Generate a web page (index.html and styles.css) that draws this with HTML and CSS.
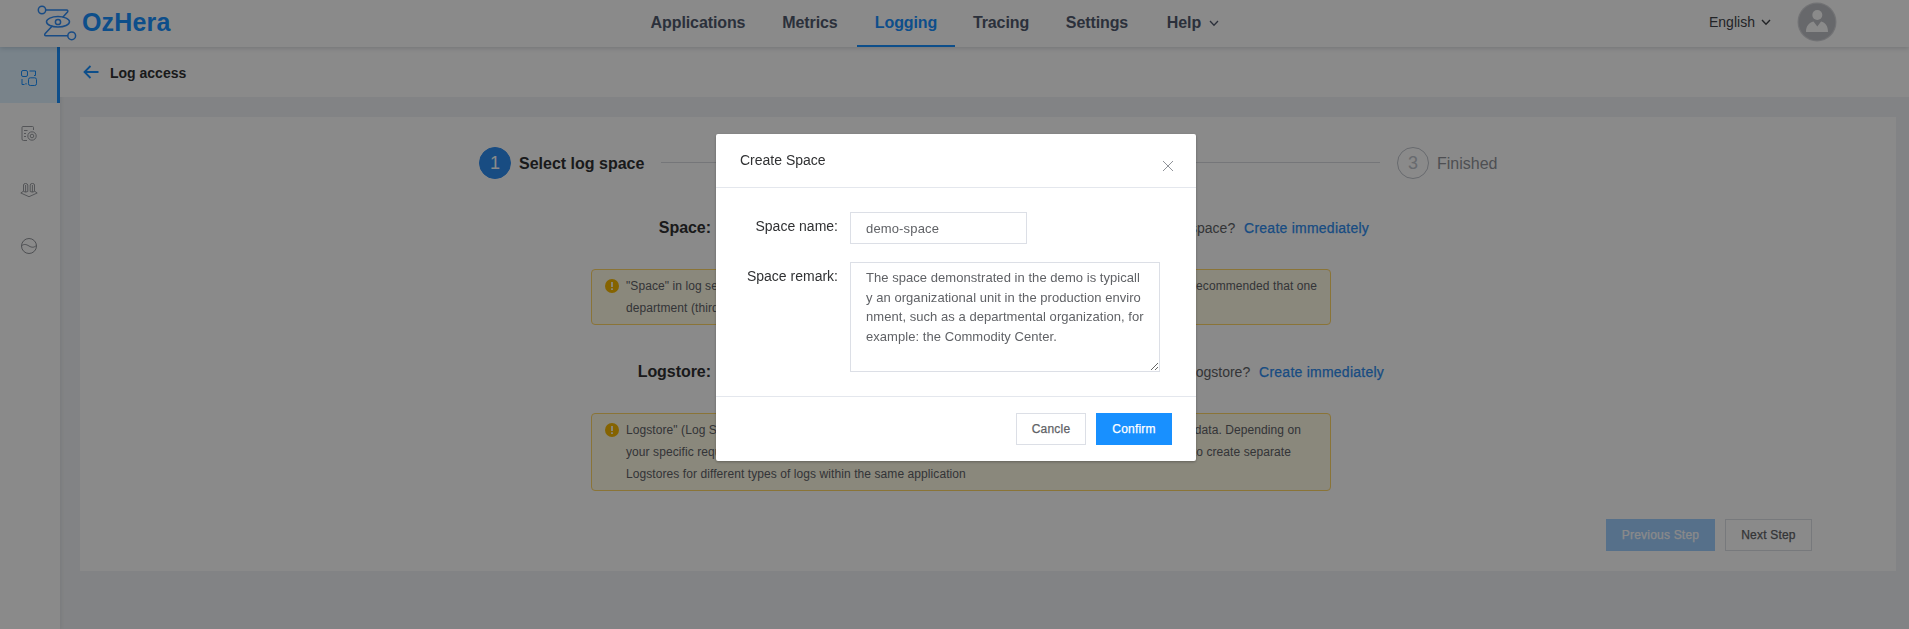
FILE: index.html
```html
<!DOCTYPE html>
<html lang="en">
<head>
<meta charset="utf-8">
<title>OzHera - Log access</title>
<link rel="stylesheet" href="styles.css">
</head>
<body>
<div class="app">
  <header class="header">
    <div class="brand">
      <svg class="brand-mark" width="40" height="38" viewBox="0 0 40 38" fill="none" stroke="#2f8cf5" stroke-width="1.500">
        <circle cx="5" cy="6" r="3.700"/><circle cx="34.700" cy="31.800" r="3.900"/>
        <path d="M9 6h20.500q2 .3 1 2l-4.500 5M30.500 31.800H9q-2-.3-1-2l7-7.500" stroke-linecap="round"/>
        <ellipse cx="21" cy="17.800" rx="11.500" ry="5.200"/><circle cx="21" cy="18" r="2.600"/>
      </svg>
      <span class="brand-name">OzHera</span>
    </div>
    <nav class="nav">
      <a class="tab tab-applications">Applications</a>
      <a class="tab tab-metrics">Metrics</a>
      <a class="tab tab-logging active">Logging</a>
      <a class="tab tab-tracing">Tracing</a>
      <a class="tab tab-settings">Settings</a>
      <a class="tab tab-help">Help<svg width="10" height="7" viewBox="0 0 10 7" fill="none" stroke="currentColor" stroke-width="1.300"><path d="M1 1l4 4.300L9 1"/></svg></a>
    </nav>
    <div class="account">
      <span class="language">English<svg width="10" height="7" viewBox="0 0 10 7" fill="none" stroke="currentColor" stroke-width="1.400"><path d="M1 1l4 4.300L9 1"/></svg></span>
      <svg class="avatar" width="40" height="40" viewBox="0 0 40 40">
        <circle cx="20" cy="20" r="19.500" fill="#d3d4d8"/><circle cx="20" cy="20" r="18.300" fill="#bfc0c6"/>
        <circle cx="20.300" cy="13" r="5" fill="#fff"/><path d="M9 30c0-6 3-9.500 7.500-10.500l3.800 5 3.800-5C28.500 20.500 31 24 31 30z" fill="#fff"/>
      </svg>
    </div>
  </header>
  <div class="body">
    <aside class="sidebar">
      <a class="side-item active"><svg width="18" height="18" viewBox="0 0 18 18" fill="none" stroke="currentColor" stroke-width="1"><rect x="1.500" y="1.500" width="6" height="6" rx="1.500"/><path d="M9.500 2h6v4.500h-1.500M2 10v5.500h2.500M6 14v1.500"/><rect x="8.500" y="8.800" width="8" height="7.700" rx="1.800"/></svg></a>
      <a class="side-item"><svg width="18" height="18" viewBox="0 0 18 18" fill="none" stroke="currentColor" stroke-width=".9"><path d="M7 15.500H3.500q-1.500 0-1.500-1.500V2.500q0-1 1-1h9.500q1 0 1 1V5M4 5.500h3.500M4 8.500h2M4 11.500h2"/><circle cx="12" cy="11" r="4.200"/><circle cx="12" cy="11" r="1.800"/></svg></a>
      <a class="side-item"><svg width="18" height="18" viewBox="0 0 18 18" fill="none" stroke="currentColor" stroke-width=".9"><path d="M3.500 10.500V4q0-1.500 2-1.500T7.800 4v6.500q-2.200 1.200-4.300 0zM10.200 10.500V4q0-1.500 2.200-1.500T14.500 4v6.500q-2.200 1.200-4.300 0zM5.600 4v7M12.400 4v7M3 10.500L.800 12 9 15.700 17.200 12 15 10.500"/></svg></a>
      <a class="side-item"><svg width="18" height="18" viewBox="0 0 18 18" fill="none" stroke="currentColor" stroke-width="1"><circle cx="9" cy="9" r="7.500"/><path d="M1.500 9C4 6.500 6.500 7.500 9 9s5 2 7.500-.8"/></svg></a>
    </aside>
    <main class="main">
      <div class="page-bar">
        <svg width="16" height="14" viewBox="0 0 16 14" fill="none" stroke="#1890ff" stroke-width="1.800"><path d="M7.500 1L1.500 7l6 6M1.500 7H15.500"/></svg>
        <h1 class="page-title">Log access</h1>
      </div>
      <section class="panel">
        <div class="steps">
          <span class="step-dot current">1</span><span class="step-label current">Select log space</span>
          <span class="step-line"></span>
          <span class="step-dot">3</span><span class="step-label">Finished</span>
        </div>
        <div class="field-row">
          <strong class="field-label">Space:</strong>
          <span class="field-tip space-tip">No space? <a class="link">Create immediately</a></span>
        </div>
        <div class="alert space-alert">
          <svg class="alert-icon" width="14" height="14" viewBox="0 0 14 14"><circle cx="7" cy="7" r="7" fill="#f5b800"/><path d="M7 3v5M7 9.300v1.700" stroke="#fff" stroke-width="1.700"/></svg>
          <div class="alert-text">
            <p class="split split-a"><span>"Space" in log service</span><span>recommended that one</span></p>
            <p>department (third-level)</p>
          </div>
        </div>
        <div class="field-row store-row">
          <strong class="field-label">Logstore:</strong>
          <span class="field-tip store-tip">No Logstore? <a class="link">Create immediately</a></span>
        </div>
        <div class="alert store-alert">
          <svg class="alert-icon" width="14" height="14" viewBox="0 0 14 14"><circle cx="7" cy="7" r="7" fill="#f5b800"/><path d="M7 3v5M7 9.300v1.700" stroke="#fff" stroke-width="1.700"/></svg>
          <div class="alert-text">
            <p class="split split-b"><span>Logstore" (Log Storage)</span><span>data. Depending on</span></p>
            <p class="split split-c"><span>your specific requirements</span><span>to create separate</span></p>
            <p>Logstores for different types of logs within the same application</p>
          </div>
        </div>
        <div class="panel-actions">
          <button class="btn btn-previous">Previous Step</button>
          <button class="btn btn-next">Next Step</button>
        </div>
      </section>
    </main>
  </div>
</div>
<div class="overlay">
  <div class="dialog">
    <div class="dialog-header">
      <span class="dialog-title">Create Space</span>
      <svg class="dialog-close" width="12" height="12" viewBox="0 0 12 12" fill="none" stroke="#909399" stroke-width="1"><path d="M1 1l10 10M11 1L1 11"/></svg>
    </div>
    <form class="dialog-body">
      <label class="form-label" for="name">Space name:</label>
      <input class="control control-name" id="name" value="demo-space">
      <label class="form-label" for="remark">Space remark:</label>
      <textarea class="control control-remark" id="remark" spellcheck="false">The space demonstrated in the demo is typicall
y an organizational unit in the production enviro
nment, such as a departmental organization, for
example: the Commodity Center.</textarea>
    </form>
    <div class="dialog-footer">
      <button class="btn btn-cancel">Cancle</button>
      <button class="btn btn-confirm">Confirm</button>
    </div>
  </div>
</div>
</body>
</html>
```
FILE: styles.css
```css
* { box-sizing: border-box; }
body { margin: 0; overflow: hidden; font-family: "Liberation Sans", Arial, sans-serif; font-size: 14px; color: #303133; }
p, h1 { margin: 0; }
svg { flex: none; }
.app { height: 629px; display: flex; flex-direction: column; background: #f0f2f5; }

.header { height: 47px; flex: none; display: flex; background: #fff; box-shadow: 0 1px 5px rgba(0, 21, 41, .18); z-index: 1; }
.brand { width: 633px; flex: none; padding: 4px 0 0 37px; display: flex; gap: 5px; }
.brand-name { font-size: 25px; line-height: 36px; font-weight: 700; color: #1890ff; letter-spacing: .15px; }
.nav { display: flex; }
.tab { height: 47px; line-height: 45px; text-align: center; font-size: 16px; font-weight: 700; color: #515a6e; letter-spacing: -.1px; white-space: nowrap; }
.tab.active { color: #1890ff; border-bottom: 2px solid #1890ff; }
.tab-applications { width: 130px; }
.tab-metrics { width: 94px; }
.tab-logging { width: 98px; }
.tab-tracing { width: 92px; }
.tab-settings { width: 100px; }
.tab-help { width: 92px; }
.tab svg { margin-left: 8px; vertical-align: 1px; }
.account { margin-left: auto; padding-right: 72px; display: flex; }
.language { font-size: 14px; line-height: 45px; width: 88px; white-space: nowrap; color: #515a6e; color: #404348; }
.language svg { margin-left: 6px; vertical-align: 1px; }
.avatar { margin-top: 2px; }

.body { flex: 1; display: flex; }
.sidebar { width: 60px; background: #fff; box-shadow: 1px 0 4px rgba(0, 21, 41, .08); }
.side-item { height: 56px; padding: 6px 0 0 20px; display: flex; align-items: center; color: #909399; }
.side-item.active { color: #1890ff; background: #dff2ff; border-right: 3px solid #1890ff; }
.main { flex: 1; }
.page-bar { height: 50px; padding: 0 0 1px 23px; display: flex; align-items: center; gap: 11px; background: #fff; }
.page-title { font-size: 14px; line-height: 20px; padding-top: 3px; }

.panel { margin: 20px 13px 0 20px; height: 454px; padding-top: 30px; background: #fff; }
.steps { height: 32px; margin-left: 399px; display: flex; align-items: center; }
.step-dot { width: 32px; height: 32px; border: 1px solid #c0c4cc; border-radius: 50%; line-height: 31px; text-align: center; font-size: 18px; color: #c0c4cc; }
.step-dot.current { background: #2d8cf0; border-color: #2d8cf0; color: #fff; }
.step-label { margin-left: 8px; padding-top: 2px; font-size: 16px; color: #909399; }
.step-label.current { width: 142px; color: #303133; font-weight: 700; }
.step-line { width: 719px; height: 1px; margin: -2px 17px 0 0; background: #d8dae0; }

.field-row { height: 20px; margin: 39px 0 0 511px; line-height: 20px; display: flex; align-items: center; }
.store-row { margin-top: 37px; }
.field-label { width: 120px; text-align: right; font-size: 16px; white-space: nowrap; letter-spacing: -.05px; }
.field-tip { text-align: right; color: #606266; }
.space-tip { width: 658px; }
.store-tip { width: 673px; }
.link { margin-left: 5px; color: #2d8cf0; letter-spacing: .24px; -webkit-text-stroke: .25px #2d8cf0; }
.alert { width: 740px; margin: 31px 0 0 511px; padding: 5px 10px 5px 13px; display: flex; gap: 7px; border: 1px solid #ffd666; border-radius: 4px; background: #fffbe6; }
.space-alert { height: 56px; }
.store-alert { height: 78px; }
.alert-icon { margin-top: 4px; }
.alert-text { font-size: 12px; line-height: 22px; color: #606266; white-space: nowrap; letter-spacing: .08px; }
.split { display: flex; justify-content: space-between; }
.split-a { width: 691px; }
.split-b { width: 675px; }
.split-c { width: 665px; }
.panel-actions { margin: 28px 84px 0 0; display: flex; justify-content: flex-end; gap: 10px; }
.btn { height: 32px; padding: 0; font: 12px "Liberation Sans", Arial, sans-serif; -webkit-text-stroke: .25px currentColor; letter-spacing: .2px; border: 1px solid #dcdfe6; background: #fff; color: #606266; }
.btn-previous { width: 109px; background: #a0cfff; border-color: #a0cfff; color: #fff; }
.btn-next { width: 87px; }

.overlay { position: fixed; inset: 0; padding: 134px 0 0 716px; background: rgba(0, 0, 0, .46); z-index: 2; }
.dialog { width: 480px; height: 327px; background: #fff; border-radius: 2px; box-shadow: 0 1px 3px rgba(0, 0, 0, .3); }
.dialog-header { height: 54px; padding: 15px 22px 0 24px; display: flex; justify-content: space-between; border-bottom: 1px solid #e4e7ed; }
.dialog-title { font-size: 14px; line-height: 22px; }
.dialog-close { margin-top: 11px; }
.dialog-body { height: 208px; padding: 24px 0 0 24px; display: grid; grid-template-columns: 98px 310px; grid-template-rows: 32px 110px; gap: 18px 12px; }
.form-label { text-align: right; line-height: 28px; }
.control { padding: 0 15px; border: 1px solid #dcdfe6; border-radius: 0; background: #fff; color: #606266; font: 13px "Liberation Sans", Arial, sans-serif; letter-spacing: .05px; outline: 0; }
.control-name { width: 177px; letter-spacing: .15px; }
.control-remark { width: 310px; height: 110px; padding: 5px 0 5px 15px; line-height: 19.500px; resize: vertical; overflow: hidden; white-space: pre; }
.dialog-footer { height: 65px; padding: 16px 24px 0 0; border-top: 1px solid #e4e7ed; display: flex; justify-content: flex-end; gap: 10px; }
.btn-cancel { width: 70px; }
.btn-confirm { width: 76px; border-color: #1890ff; background: #1890ff; color: #fff; }
```
